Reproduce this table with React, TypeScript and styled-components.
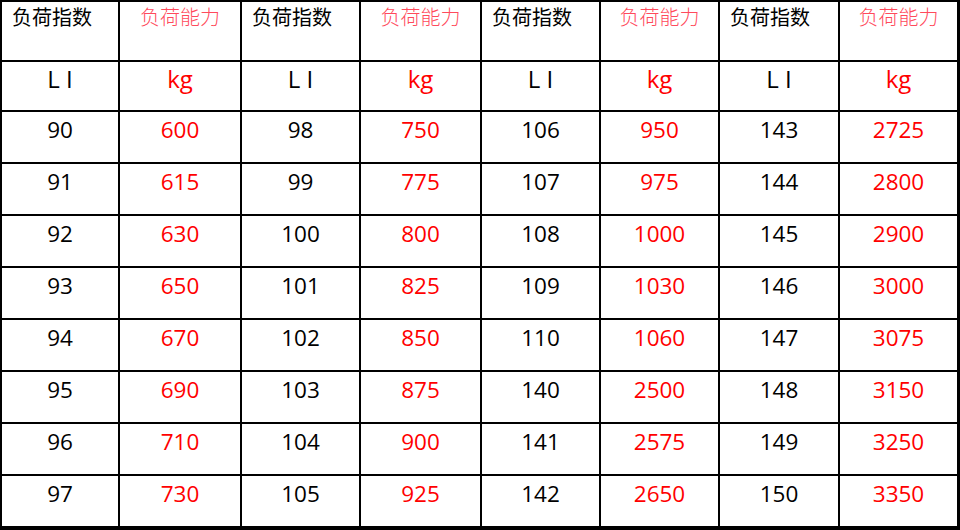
import React from 'react';
import styled, { createGlobalStyle } from 'styled-components';

const GlobalStyle = createGlobalStyle`
  html, body {
    margin: 0;
    padding: 0;
    background: #ffffff;
  }
  * {
    box-sizing: border-box;
  }
`;

// four pairs of columns: load index and load capacity in kg
const groups = [
  { li: [90, 91, 92, 93, 94, 95, 96, 97], kg: [600, 615, 630, 650, 670, 690, 710, 730] },
  { li: [98, 99, 100, 101, 102, 103, 104, 105], kg: [750, 775, 800, 825, 850, 875, 900, 925] },
  { li: [106, 107, 108, 109, 110, 140, 141, 142], kg: [950, 975, 1000, 1030, 1060, 2500, 2575, 2650] },
  { li: [143, 144, 145, 146, 147, 148, 149, 150], kg: [2725, 2800, 2900, 3000, 3075, 3150, 3250, 3350] },
];

const Table = styled.div`
  width: 960px;
  height: 530px;
  display: grid;
  grid-template-columns: 118px 122px 119px 121px 119px 119px 120px 117px;
  grid-template-rows: 60px 50px repeat(7, 52px) 50px;
  border-style: solid;
  border-color: #000;
  border-width: 2px 3px 4px 2px;
  background: #fff;
`;

const Cell = styled.div<{ $last: boolean; $bottom: boolean }>`
  border-right: ${(p) => (p.$last ? '0' : '2px solid #000')};
  border-bottom: ${(p) => (p.$bottom ? '0' : '2px solid #000')};
  display: flex;
  overflow: hidden;
  white-space: nowrap;
`;

const HeadCell = styled(Cell)<{ $red: boolean }>`
  font-family: "Noto Sans CJK SC", sans-serif;
  font-size: 20px;
  line-height: normal;
  align-items: flex-start;
  justify-content: ${(p) => (p.$red ? 'center' : 'flex-start')};
  padding-left: ${(p) => (p.$red ? '0' : '10px')};
  color: ${(p) => (p.$red ? '#ff4a5c' : '#000')};
  font-weight: ${(p) => (p.$red ? 300 : 400)};
`;

const UnitCell = styled(Cell)<{ $red: boolean }>`
  font-family: "Open Sans", sans-serif;
  font-size: 24px;
  line-height: normal;
  align-items: flex-start;
  justify-content: center;
  color: ${(p) => (p.$red ? '#ff0000' : '#000')};
`;

const DataCell = styled(Cell)<{ $red: boolean }>`
  font-family: "Open Sans", sans-serif;
  font-size: 22.5px;
  line-height: normal;
  align-items: flex-start;
  justify-content: center;
  padding-top: 2px;
  color: ${(p) => (p.$red ? '#ff0000' : '#000')};
`;

export default function App() {
  const rows = groups[0].li.length;
  return (
    <>
      <GlobalStyle />
      <Table>
        {groups.map((g, gi) => (
          <React.Fragment key={'h' + gi}>
            <HeadCell $red={false} $last={false} $bottom={false}>负荷指数</HeadCell>
            <HeadCell $red $last={gi === groups.length - 1} $bottom={false}>负荷能力</HeadCell>
          </React.Fragment>
        ))}
        {groups.map((g, gi) => (
          <React.Fragment key={'u' + gi}>
            <UnitCell $red={false} $last={false} $bottom={false}>L I</UnitCell>
            <UnitCell $red $last={gi === groups.length - 1} $bottom={false}>kg</UnitCell>
          </React.Fragment>
        ))}
        {Array.from({ length: rows }).map((_, r) =>
          groups.map((g, gi) => (
            <React.Fragment key={r + '-' + gi}>
              <DataCell $red={false} $last={false} $bottom={r === rows - 1}>{g.li[r]}</DataCell>
              <DataCell $red $last={gi === groups.length - 1} $bottom={r === rows - 1}>{g.kg[r]}</DataCell>
            </React.Fragment>
          ))
        )}
      </Table>
    </>
  );
}
